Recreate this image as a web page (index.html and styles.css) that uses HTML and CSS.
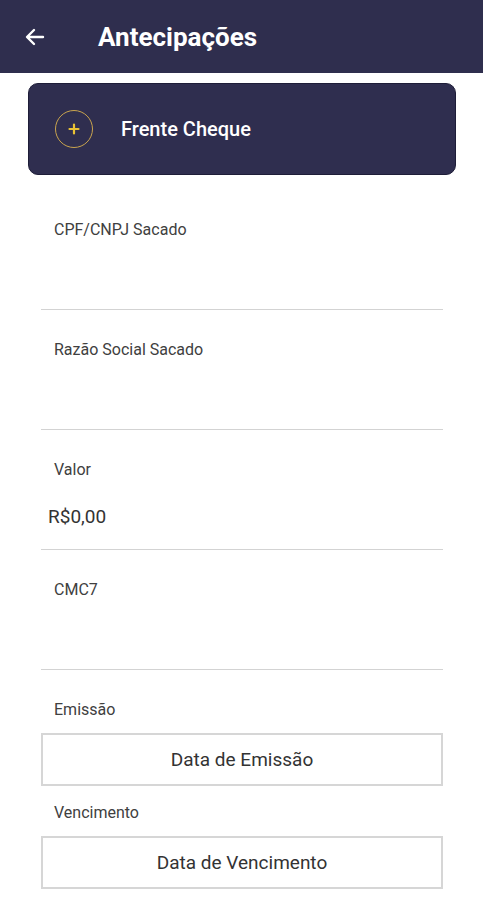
FILE: index.html
```html
<!DOCTYPE html>
<html>
<head>
  <title>Antecipações</title>
  <link rel="stylesheet" href="styles.css">
</head>
<body>

<div class="topbar">
  <svg class="back" width="24" height="24" viewBox="0 0 24 24">
    <path d="M20 12H5M11 5l-7 7 7 7" fill="none" stroke="#fff" stroke-width="2.4" stroke-linecap="round" stroke-linejoin="round"/>
  </svg>
  <span class="title">Antecipações</span>
</div>

<div class="content">
  <div class="photo-card">
    <div class="plus">
      <svg width="12" height="12" viewBox="0 0 12 12">
        <path d="M6 1.5v9M1.5 6h9" stroke="#e9c235" stroke-width="2.2" stroke-linecap="round"/>
      </svg>
    </div>
    <span class="photo-text">Frente Cheque</span>
  </div>

  <div class="field first">
    <label>CPF/CNPJ Sacado</label>
    <div class="value"></div>
  </div>
  <div class="field">
    <label>Razão Social Sacado</label>
    <div class="value"></div>
  </div>
  <div class="field">
    <label>Valor</label>
    <div class="value">R$0,00</div>
  </div>
  <div class="field">
    <label>CMC7</label>
    <div class="value"></div>
  </div>

  <div class="date-group">
    <label>Emissão</label>
    <button type="button" class="date-btn">Data de Emissão</button>
  </div>
  <div class="date-group">
    <label>Vencimento</label>
    <button type="button" class="date-btn">Data de Vencimento</button>
  </div>
</div>

</body>
</html>
```

FILE: styles.css
```css
body {
  margin: 0;
  font-family: Roboto, "Liberation Sans", sans-serif;
  background-color: #fff;
  color: #333;
}

.topbar {
  height: 73px;
  background-color: #2f2e4e;
  display: flex;
  align-items: center;
  padding-left: 23px;
}

.back {
  margin-top: 1px;
}

.title {
  color: #fff;
  font-size: 26px;
  font-weight: bold;
  margin-left: 51px;
}

.content {
  padding: 10px 40px 0 41px;
}

.photo-card {
  margin: 0 -13px 0 -13px;
  height: 92px;
  background-color: #2f2e4f;
  border: 1px solid #1e1d38;
  border-radius: 10px;
  display: flex;
  align-items: center;
  padding-left: 26px;
  box-sizing: border-box;
}

.plus {
  width: 38px;
  height: 38px;
  border: 1.5px solid #c9a44e;
  border-radius: 50%;
  box-sizing: border-box;
  display: flex;
  align-items: center;
  justify-content: center;
}

.photo-text {
  color: #fff;
  font-size: 20px;
  font-weight: 500;
  margin-left: 28px;
}

.field {
  height: 120px;
  border-bottom: 1.5px solid #d3d3d3;
  box-sizing: border-box;
  padding-top: 30px;
}

.field.first {
  margin-top: 15px;
}

.field label, .date-group label {
  display: block;
  font-size: 16px;
  line-height: 19px;
  color: #404040;
  padding-left: 13px;
}

.value {
  font-size: 19px;
  line-height: 22px;
  color: #333;
  margin-top: 27px;
  padding-left: 7px;
}

.date-group {
  padding-top: 30px;
}

.date-group + .date-group {
  padding-top: 17px;
}

.date-btn {
  display: block;
  width: 100%;
  height: 53px;
  margin-top: 14px;
  background-color: #fff;
  border: 2px solid #d6d6d6;
  font-family: Roboto, "Liberation Sans", sans-serif;
  font-size: 19px;
  color: #333;
}
```
